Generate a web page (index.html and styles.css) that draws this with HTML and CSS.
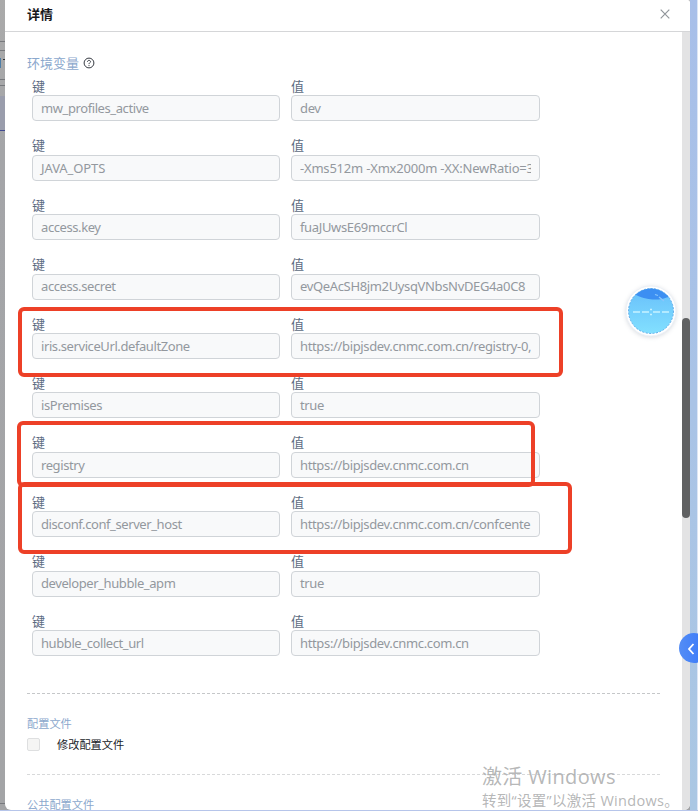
FILE: index.html
```html
<!DOCTYPE html>
<html lang="zh-CN">
<head>
<meta charset="utf-8">
<title>详情</title>
<link rel="stylesheet" href="styles.css">
</head>
<body>
<div class="page">
  <div class="backdrop"><i class="line l1"></i><i class="line l2"></i><i class="line l3"></i><i class="line l4"></i><i class="shade"></i><i class="mark"></i><i class="tee"></i><i class="line l5"></i></div>
  <main class="panel">
    <header class="header">
      <h1>详情</h1>
      <svg class="close" viewBox="0 0 10 10"><path d="M.7.7l8.6 8.6M9.3.7L.7 9.3"/></svg>
    </header>
    <div class="body">
      <div class="content">
        <h2 class="title">环境变量
          <svg class="help" viewBox="0 0 12 12"><circle cx="6" cy="6" r="4.9"/><path d="M4.5 4.9C4.5 3.9 5.1 3.4 6 3.4s1.5.5 1.5 1.3C7.500 5.700 6 5.800 6 7.100M6 8.100v1"/></svg>
        </h2>
        <div class="vars">
          <div class="row"><label>键<span class="input">mw_profiles_active</span></label><label>值<span class="input">dev</span></label></div>
          <div class="row"><label>键<span class="input wide">JAVA_OPTS</span></label><label>值<span class="input"><span class="clip opts">-Xms512m -Xmx2000m -XX:NewRatio=3</span></span></label></div>
          <div class="row"><label>键<span class="input">access.key</span></label><label>值<span class="input">fuaJUwsE69mccrCl</span></label></div>
          <div class="row"><label>键<span class="input">access.secret</span></label><label>值<span class="input">evQeAcSH8jm2UysqVNbsNvDEG4a0C8</span></label></div>
          <div class="row"><label>键<span class="input">iris.serviceUrl.defaultZone</span></label><label>值<span class="input"><span class="clip">https://bipjsdev.cnmc.com.cn/registry-0,</span></span></label></div>
          <div class="row"><label>键<span class="input">isPremises</span></label><label>值<span class="input">true</span></label></div>
          <div class="row"><label>键<span class="input">registry</span></label><label>值<span class="input">https://bipjsdev.cnmc.com.cn</span></label></div>
          <div class="row"><label>键<span class="input">disconf.conf_server_host</span></label><label>值<span class="input"><span class="clip">https://bipjsdev.cnmc.com.cn/confcente</span></span></label></div>
          <div class="row"><label>键<span class="input">developer_hubble_apm</span></label><label>值<span class="input">true</span></label></div>
          <div class="row"><label>键<span class="input">hubble_collect_url</span></label><label>值<span class="input">https://bipjsdev.cnmc.com.cn</span></label></div>
        </div>
        <section class="config">
          <h3>配置文件</h3>
          <div class="check"><i></i><span>修改配置文件</span></div>
        </section>
        <section class="public"><h3>公共配置文件</h3></section>
      </div>
      <div class="track"><div class="thumb"></div></div>
    </div>
  </main>
  <div class="edge"></div>
</div>
<div class="mark-box box1"></div>
<div class="mark-box box2"></div>
<div class="mark-box box3"></div>
<svg class="ball" viewBox="0 0 56 56">
  <defs>
    <linearGradient id="water" x1="0" y1="0" x2="0" y2="1"><stop offset="0" stop-color="#68bffa"/><stop offset="1" stop-color="#82e0ff"/></linearGradient>
    <clipPath id="disc"><circle cx="28" cy="28" r="22.500"/></clipPath>
  </defs>
  <circle class="ring" cx="28" cy="28" r="25"/>
  <circle cx="28" cy="28" r="22.500" fill="url(#water)"/>
  <path clip-path="url(#disc)" fill="#3c8ff2" d="M5 4h46v9c-5 0-7 2-12 3-8 1-15 1-26-4z"/>
  <path d="M32 11.500l3 1M36 14l5 4" stroke="#8cc6fb" stroke-width="1.300"/>
  <circle cx="28" cy="28" r="22.500" fill="none" stroke="#4a9de5" stroke-width=".8" stroke-dasharray="2 1.500"/>
  <path d="M10 29h7m2 0h7m4 0h7m2 0h7M27 26.500h2M27 31.500h2" stroke="#c6f2ff" stroke-width="1.700"/>
</svg>
<div class="tab"><svg viewBox="0 0 8 12"><path d="M6.500 1L2 6l4.500 5"/></svg></div>
<div class="watermark"><p class="big">激活 Windows</p><p class="small">转到“设置”以激活 Windows。</p></div>
</body>
</html>
```
FILE: styles.css
```css
* { box-sizing: border-box; }
body {
  margin: 0;
  width: 698px;
  height: 811px;
  overflow: hidden;
  position: relative;
  font-family: "Noto Sans", "Noto Sans CJK SC", sans-serif;
  font-size: 13px;
  background: #b6c5ea;
}
h1, h2, h3, p { margin: 0; font-weight: 400; }
svg { fill: none; display: block; }
.page { display: grid; grid-template-columns: 5px 685px 8px; height: 810px; background: #a3a4a6; }
.backdrop { position: relative; background: linear-gradient(#aaa 0, #a4a5a8 150px, #a3a4a6); overflow: hidden; }
.line { position: absolute; left: 0; width: 5px; height: 1px; background: #77797d; }
.l1 { top: 41px; }
.l2 { top: 50px; }
.l3 { top: 79px; }
.l4 { top: 85px; }
.l5 { top: 803px; }
.shade { position: absolute; top: 96px; width: 5px; height: 35px; background: #9a9dac; border-bottom: 1px solid #414a91; }
.mark { position: absolute; top: 58px; width: 1px; height: 10px; background: #4e7da6; }
.tee { position: absolute; top: 59px; left: 3px; width: 2px; height: 1px; background: #333; }
.panel { display: flex; flex-direction: column; min-height: 0; background: #fff; border-radius: 0 2px 6px 6px; overflow: hidden; }
.header { flex: none; height: 32px; padding: 0 20px 4px 22px; display: flex; justify-content: space-between; align-items: center; border-bottom: 1px solid #d5d6d8; }
h1 { font-size: 13px; font-weight: 700; color: #17181b; line-height: 24px; }
.close { width: 10px; height: 10px; stroke: #91969b; stroke-width: 1.2; }
.body { flex: 1; min-height: 0; display: flex; justify-content: space-between; }
.content { width: 655px; padding: 20px 0 0 22px; }
.title { height: 23px; padding-bottom: 2px; display: flex; align-items: center; gap: 4px; font-size: 13px; line-height: 20px; color: #8ba8cd; }
.help { width: 12px; height: 12px; margin-top: 1px; stroke: #353941; stroke-width: 1; }
.vars { height: 619px; padding: 3px 0 0 5px; border-bottom: 1px dashed #c5c7c9; }
.row { display: grid; grid-template-columns: 248px 249px; column-gap: 11px; height: 59.42px; }
.row label { display: block; line-height: 16.4px; color: #5c6b82; }
.input { display: flex; align-items: center; height: 26px; margin-top: 1px; padding: 0 8px; border: 1px solid #d0d4d8; border-radius: 4px; background: #f8f9fa; color: #93989e; white-space: nowrap; letter-spacing: -.41px; }
.row label:last-child .input { letter-spacing: -.35px; }
.row .wide { letter-spacing: -.1px; }
.clip { width: 232px; overflow: hidden; }
.row .opts { letter-spacing: -.2px; }
.config { height: 81px; padding-top: 21px; border-bottom: 1px dashed #d8d9da; }
h3 { font-size: 11.2px; line-height: 18px; color: #8ba8cd; }
.check { display: flex; align-items: center; height: 22px; gap: 17px; font-size: 11.2px; color: #20232a; }
.check i { width: 13px; height: 13px; border: 1px solid #dedfe0; border-radius: 2px; background: #f5f5f4; }
.public { padding-top: 21px; }
.track { width: 8px; background: #e3e3e4; }
.thumb { height: 200px; margin-top: 286px; border-radius: 4px; background: #606162; }
.edge { background: linear-gradient(#a8bfe9, #aac7e3); border-right: 1px solid #dce5f5; }
.mark-box { position: absolute; border: 4px solid #ed4027; border-radius: 6px; }
.box1 { left: 18px; top: 307px; width: 545px; height: 70px; }
.box2 { left: 17px; top: 421px; width: 518px; height: 66px; }
.box3 { left: 18px; top: 482px; width: 554px; height: 72px; }
.ball { position: absolute; left: 623px; top: 283px; width: 56px; height: 56px; filter: drop-shadow(0 1px 2px #9ea8b466); }
.ring { fill: #fff; stroke: #edf1f7; }
.tab { position: absolute; left: 679px; top: 633px; width: 30px; height: 30px; padding: 10px 0 0 8px; border-radius: 15px; background: linear-gradient(90deg, #548df5, #3476fb); }
.tab svg { width: 8px; height: 12px; stroke: #fff; stroke-width: 1.8; }
.watermark { position: absolute; left: 482px; top: 764px; color: #aaabacdd; font-family: "Open Sans", "Noto Sans CJK SC", sans-serif; white-space: nowrap; }
.big { font-size: 20px; line-height: 25px; letter-spacing: .35px; }
.small { font-size: 14.5px; line-height: 23px; letter-spacing: .3px; }
```
